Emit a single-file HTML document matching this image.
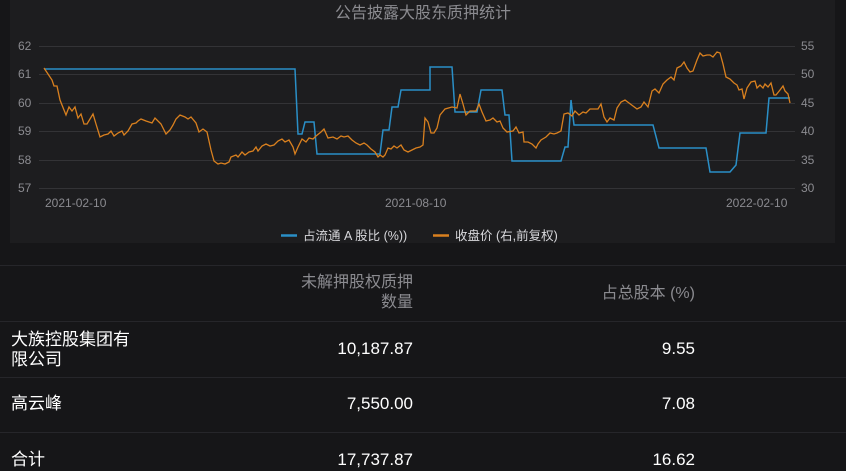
<!DOCTYPE html>
<html><head><meta charset="utf-8"><style>
body{margin:0;width:846px;height:471px;background:#161618;overflow:hidden;font-family:"Liberation Sans","Noto Sans CJK SC",sans-serif;position:relative}
.panel{position:absolute;left:10px;top:0;width:825px;height:243px;background:#1d1d1f}
.t{position:absolute;color:#fff;font-size:17px;line-height:20px}
.g{color:#8b8b90}
.sep{position:absolute;left:0;width:846px;height:1px;background:#26262a}
.r{text-align:right}
</style></head><body>
<div class="panel"></div>
<svg style="position:absolute;left:0;top:0" width="846" height="245" font-family="Liberation Sans, Noto Sans CJK SC, sans-serif">
<text x="423" y="18" fill="#8b8b90" font-size="16" text-anchor="middle">公告披露大股东质押统计</text>
<g stroke="#333336" stroke-width="1">
<line x1="39" x2="795" y1="46.5" y2="46.5"/><line x1="39" x2="795" y1="74.5" y2="74.5"/><line x1="39" x2="795" y1="103.5" y2="103.5"/><line x1="39" x2="795" y1="131.5" y2="131.5"/><line x1="39" x2="795" y1="160.5" y2="160.5"/><line x1="39" x2="795" y1="188.5" y2="188.5"/>
</g>
<g fill="#8b8b90" font-size="12">
<text x="18" y="50">62</text><text x="18" y="78">61</text><text x="18" y="107">60</text><text x="18" y="135">59</text><text x="18" y="164">58</text><text x="18" y="192">57</text>
<text x="801" y="50">55</text><text x="801" y="78">50</text><text x="801" y="107">45</text><text x="801" y="135">40</text><text x="801" y="164">35</text><text x="801" y="192">30</text>
<text x="45" y="207">2021-02-10</text><text x="385" y="207">2021-08-10</text><text x="726" y="207">2022-02-10</text>
</g>
<polyline fill="none" stroke="#2a8fc7" stroke-width="1.5" points="44,69 295,69 298,134 302,134 305,122 314,122 317,154 380,154 383,130 389,130 392,107 398,107 401,90 430,90 430,67 452,67 455,112 477,112 481,90 502,90 505,115 509,115 512,161 561,161 565,147 568,147 571,100 574,125 653,125 659,148 706,148 710,172 730,172 736,165 740,133 766,133 769,98 790,98"/>
<polyline fill="none" stroke="#d9801f" stroke-width="1.3" points="44,68 48,74 52,80 54,86 57,86 60,100 66,115 69,107 72,111 75,107 78,118 81,114 84,124 87,124 93,114 96,124 100,137 104,135 108,134 111,131 114,136 118,133 122,131 124,135 128,131 132,124 136,123 138,121 141,119 146,121 152,123 155,118 161,124 163,128 166,134 170,130 173,125 176,119 180,115 185,117 188,119 191,117 196,123 199,132 203,129 207,132 211,150 214,161 218,164 221,163 225,164 229,162 231,157 236,155 238,157 242,152 245,155 249,152 253,151 256,147 258,151 262,146 266,144 270,146 274,145 278,141 282,139 285,142 289,140 293,147 295,154 298,147 302,139 306,142 309,138 313,139 316,136 321,132 324,129 328,138 333,137 337,139 341,136 344,137 348,136 352,140 356,143 360,145 364,143 367,145 371,149 375,152 378,157 380,155 383,157 385,155 388,148 391,149 394,146 397,148 401,145 404,150 408,152 412,150 416,148 420,147 423,145 425,118 428,122 431,133 434,133 437,128 440,115 445,109 452,107 457,108 460,94 463,104 466,115 470,111 476,111 479,104 482,112 486,121 490,120 493,118 497,122 500,121 503,128 507,132 513,131 516,127 519,133 523,132 524,142 528,142 532,144 536,148 538,144 541,140 546,137 550,133 554,134 557,133 561,131 564,114 568,113 572,116 575,111 579,115 583,112 586,113 590,109 593,109 598,109 601,104 604,117 607,122 610,118 614,120 617,108 621,102 625,100 629,103 633,106 637,109 641,107 644,102 648,107 652,91 655,89 659,93 663,84 667,80 671,77 674,80 677,68 681,66 684,62 687,68 690,72 693,71 697,60 700,53 703,56 707,55 710,55 713,57 717,52 720,53 723,64 726,77 730,79 734,83 737,85 739,90 742,89 744,99 747,88 751,82 755,81 757,88 760,85 763,88 765,84 768,87 771,83 774,95 776,95 780,90 783,86 785,91 788,94 790,103"/>
<line x1="281" x2="297" y1="235.5" y2="235.5" stroke="#2a8fc7" stroke-width="2.5"/>
<text x="303" y="240" fill="#d8d8dc" font-size="12.5">占流通 A 股比 (%))</text>
<line x1="433" x2="449" y1="235.5" y2="235.5" stroke="#d9801f" stroke-width="2.5"/>
<text x="455" y="240" fill="#d8d8dc" font-size="12.5">收盘价 (右,前复权)</text>
</svg>
<div class="sep" style="top:265px"></div>
<div class="sep" style="top:321px"></div>
<div class="sep" style="top:377px"></div>
<div class="sep" style="top:432px"></div>
<div class="t g r" style="left:250px;width:163px;top:273px;font-size:16px">未解押股权质押<br>数量</div>
<div class="t g r" style="left:500px;width:195px;top:284px;font-size:16px">占总股本 (%)</div>
<div class="t" style="left:11px;top:330px">大族控股集团有<br>限公司</div>
<div class="t r" style="left:250px;width:163px;top:339px">10,187.87</div>
<div class="t r" style="left:500px;width:195px;top:339px">9.55</div>
<div class="t" style="left:11px;top:394px">高云峰</div>
<div class="t r" style="left:250px;width:163px;top:394px">7,550.00</div>
<div class="t r" style="left:500px;width:195px;top:394px">7.08</div>
<div class="t" style="left:11px;top:450px">合计</div>
<div class="t r" style="left:250px;width:163px;top:450px">17,737.87</div>
<div class="t r" style="left:500px;width:195px;top:450px">16.62</div>
</body></html>
